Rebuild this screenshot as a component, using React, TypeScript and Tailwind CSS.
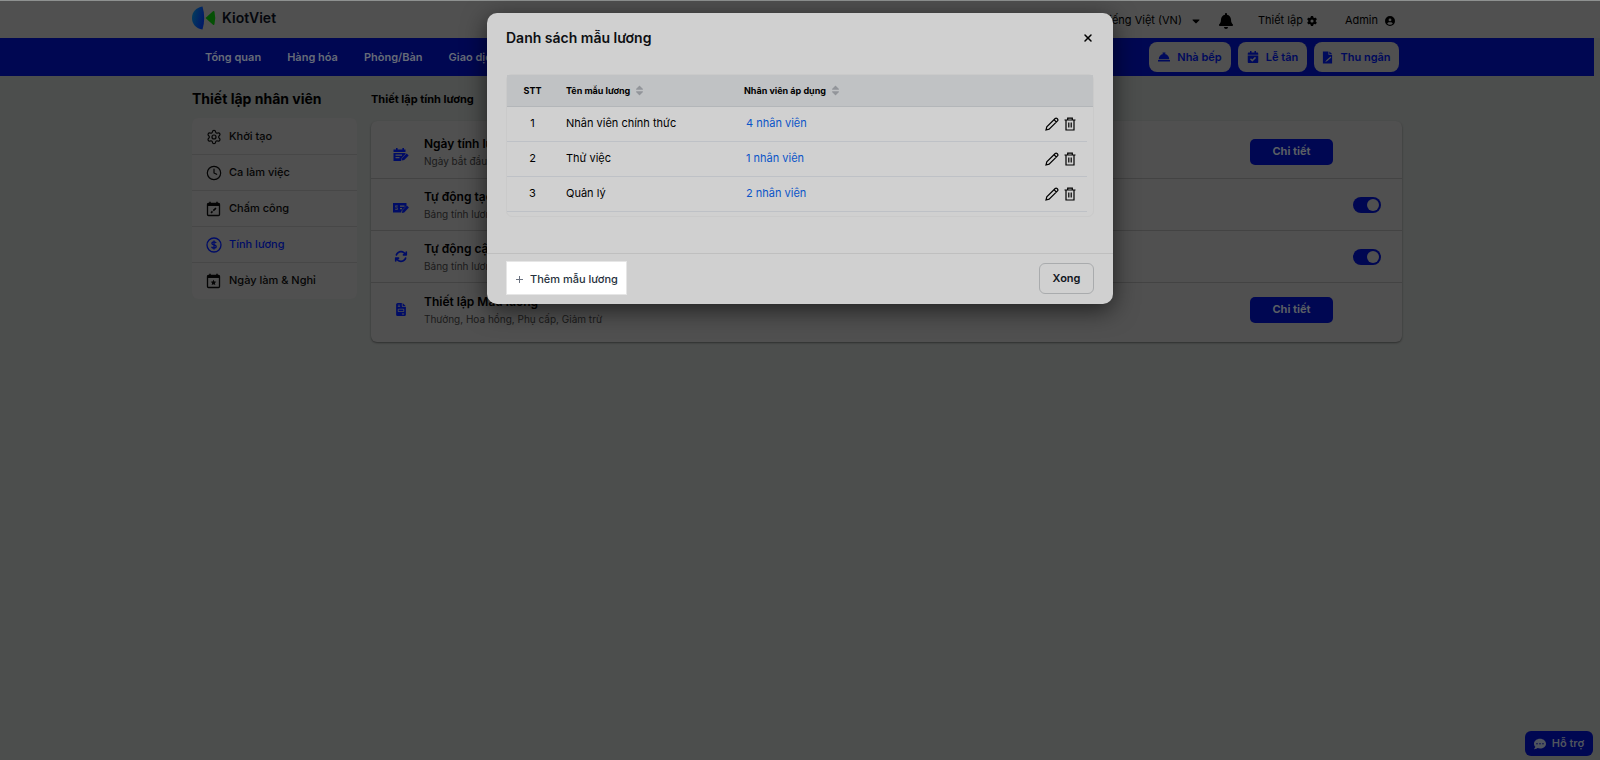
import React from "react";
import { Settings, Clock, X } from "lucide-react";
import {
  FaBell,
  FaCalendarCheck,
  FaCaretDown,
  FaCommentDots,
  FaConciergeBell,
} from "react-icons/fa";
import { FaArrowsRotate, FaCircleUser, FaFileInvoice, FaGear, FaSort } from "react-icons/fa6";

const navItems = ["Tổng quan", "Hàng hóa", "Phòng/Bàn", "Giao dịch"];

const templates = [
  { id: 1, name: "Nhân viên chính thức", staff: "4 nhân viên" },
  { id: 2, name: "Thử việc", staff: "1 nhân viên" },
  { id: 3, name: "Quản lý", staff: "2 nhân viên" },
];

const CalendarBox: React.FC<{ children: React.ReactNode }> = ({ children }) => (
  <svg viewBox="0 0 16 16" className="h-4 w-4 shrink-0" fill="none" stroke="currentColor" strokeWidth="1.3">
    <rect x="1.5" y="2.5" width="12" height="12" rx="1" />
    <path d="M1.500 3h12v1.500h-12z" fill="currentColor" strokeWidth="1" />
    <path d="M4 0.8v3M11 0.8v3" strokeWidth="1.5" />
    {children}
  </svg>
);

const DollarCircle = () => (
  <svg viewBox="0 0 16 16" className="h-4 w-4 shrink-0" fill="none" stroke="currentColor" strokeWidth="1.3">
    <circle cx="8" cy="8" r="7" />
    <path d="M10.2 6.1C9.8 5.2 9 4.9 8 4.9c-1.200 0-2.100.5-2.100 1.500 0 2.200 4.300.9 4.300 3.200 0 1-.9 1.600-2.200 1.600-1.200 0-2.100-.5-2.400-1.500M8 3.600v9" />
  </svg>
);

const menu = [
  { label: "Khởi tạo", icon: <Settings className="h-4 w-4" strokeWidth={1.8} /> },
  { label: "Ca làm việc", icon: <Clock className="h-4 w-4" strokeWidth={1.8} /> },
  {
    label: "Chấm công",
    icon: (
      <CalendarBox>
        <path d="M5 11.800 6.500 10.400M7.300 9.600 10 7.200" strokeWidth="1.600" />
      </CalendarBox>
    ),
  },
  { label: "Tính lương", icon: <DollarCircle />, active: true },
  {
    label: "Ngày làm & Nghỉ",
    icon: (
      <CalendarBox>
        <path
          d="m7.500 6.700 .9 1.800 1.900.3-1.400 1.300.4 2-1.800-.9-1.800.9.4-2-1.400-1.300 1.900-.3z"
          fill="currentColor"
          stroke="none"
        />
      </CalendarBox>
    ),
  },
];

// small blue glyphs with a pen laid over the lower right corner
const CalendarPen = () => (
  <svg viewBox="0 -6 16 20" className="h-5 w-4" fill="currentColor">
    <path
      d="M3 0h1.600v1.500h4.800V0H11v1.500h1.500V4H.5V1.500H3zM.5 5h12v1L8.800 9.700 8 13H.5zM2.500 6.600v1.200H9V6.600zm0 2.500v1.200h4V9.100z"
      fillRule="evenodd"
    />
    <path d="m13.700 5.500 2 2-4.500 4.500-2.500.6.500-2.600z" />
  </svg>
);

const MoneyPen = () => (
  <svg viewBox="0 -6 16 20" className="h-5 w-4" fill="currentColor">
    <path
      d="M0 2h13.500v2.800L8.500 9.700l-.3 1.800H0zM7 4.500v1.200h4.500V4.500zm0 2.500v1.200h2V7zM2.200 4.500v1.700l2 .9v.6h-2v1h2.600V6.800l-2-.9v-.5h2v-.9z"
      fillRule="evenodd"
    />
    <path d="m13.900 4.500 2 2-4.700 4.900-2.300.5.500-2.500z" />
  </svg>
);

const FilePen = () => (
  <svg viewBox="0 0 12 14" className="h-[13px] w-[11px]" fill="currentColor">
    <path
      d="M1 .5h6V4h4v9.500H1zM8 .5 11 3.200H8zM9.300 6 5 9.600l-1.500 2.200 2.400-1 4.300-3.700z"
      fillRule="evenodd"
    />
  </svg>
);

const Toggle: React.FC<{ label: string }> = ({ label }) => (
  <label className="relative mr-[21px] block h-4 w-7">
    <input
      type="checkbox"
      defaultChecked
      aria-label={label}
      className="peer block h-4 w-7 appearance-none rounded-full bg-[#444444] checked:bg-[#000752]"
    />
    <span className="pointer-events-none absolute top-[2px] left-[2px] h-3 w-3 rounded-full bg-[#505050] peer-checked:left-[14px]" />
  </label>
);

const DetailButton = () => (
  <button className="mr-[69px] h-[26px] w-[83px] rounded-[5px] bg-[#000752] text-[11px] font-bold text-[#5a5e64]">
    Chi tiết
  </button>
);

const settings = [
  { title: "Ngày tính lương", note: "Ngày bắt đầu kỳ", icon: <CalendarPen />, toggle: false },
  { title: "Tự động tạo", note: "Bảng tính lương", icon: <MoneyPen />, toggle: true },
  {
    title: "Tự động cập nhật",
    note: "Bảng tính lương",
    icon: <FaArrowsRotate className="h-[13px] w-4" />,
    toggle: true,
  },
  {
    title: "Thiết lập Mẫu lương",
    note: "Thưởng, Hoa hồng, Phụ cấp, Giảm trừ",
    icon: <FaFileInvoice className="h-[13px] w-4" />,
    toggle: false,
  },
];

const Logo = () => (
  <svg viewBox="0 0 24 24" className="h-6 w-6">
    <defs>
      <linearGradient id="wing" x1="0" x2="1" y1="0" y2="0.4">
        <stop offset="0" stopColor="#04405c" />
        <stop offset="1" stopColor="#001a66" />
      </linearGradient>
    </defs>
    <path d="M10.500.5C4 1.500 0 6 0 12s4 10.700 10.500 11.500C12.800 16 12.800 8 10.500.5z" fill="url(#wing)" />
    <path d="M13.500 12 21 5.200q1-.6 1.500.6 1.500 6.200 0 12.400-.5 1.200-1.500.6z" fill="#045004" />
  </svg>
);

const PencilIcon = () => (
  <svg viewBox="0 0 14 14" className="h-[14px] w-[14px]" fill="none" stroke="currentColor" strokeWidth="1.2">
    <path d="M1 13l.8-3.200 8.400-8.300a1.300 1.300 0 0 1 1.800 0l.5.5a1.300 1.300 0 0 1 0 1.800l-8.400 8.400zM9 2.700l2.300 2.300" />
  </svg>
);

const TrashIcon = () => (
  <svg viewBox="0 0 12 14" className="h-[14px] w-3" fill="none" stroke="currentColor" strokeWidth="1.200">
    <path d="M.5 3h11M2 3v10h8V3M3.700 3V1.200h4.600V3M4.800 5.500v5M7.200 5.500v5" />
  </svg>
);

const Modal = () => (
  <div
    role="dialog"
    aria-labelledby="modal-title"
    className="absolute top-[13px] left-1/2 w-[626px] -translate-x-1/2 rounded-[10px] bg-[#d0d0d0] text-black shadow-[0_6px_24px_rgba(0,0,0,0.6)]"
  >
    <div className="flex h-[61px] justify-between px-[19px] pt-[15px]">
      <h2 id="modal-title" className="text-sm leading-5 font-semibold text-[#0d0f12]">
        Danh sách mẫu lương
      </h2>
      <button aria-label="Đóng" className="h-5">
        <X className="h-3 w-3" strokeWidth={3} />
      </button>
    </div>

    <div className="mx-[19px] rounded-md border border-[#cacaca] pb-1">
      <table className="w-full table-fixed border-collapse text-[11px]">
        <thead className="bg-[#c0c2c4] text-[9px]">
          <tr className="h-[31px] border-b border-[#b3b6b9] text-left">
            <th className="w-[51px] text-center font-bold">STT</th>
            <th className="w-[178px] pl-2 font-bold">
              <span className="flex items-center gap-[5px]">
                Tên mẫu lương <FaSort className="h-[11px] w-[9px] text-[#92959a]" />
              </span>
            </th>
            <th className="pl-2 font-bold">
              <span className="flex items-center gap-[5px]">
                Nhân viên áp dụng <FaSort className="h-[11px] w-[9px] text-[#92959a]" />
              </span>
            </th>
            <th className="w-[54px]" aria-label="Thao tác" />
            <th className="w-[6px]" aria-hidden="true" />
          </tr>
        </thead>
        <tbody>
          {templates.map((t) => (
            <tr key={t.id} className="h-[35px]">
              <td className="border-b border-[#bec1c6] text-center">{t.id}</td>
              <td className="border-b border-[#bec1c6] pl-2">{t.name}</td>
              <td className="border-b border-[#bec1c6] pl-[10px]">
                <a href="#" className="text-[#0b55c8]">
                  {t.staff}
                </a>
              </td>
              <td className="border-b border-[#bec1c6]">
                <div className="flex items-center gap-[5px] pl-3">
                  <button aria-label="Sửa">
                    <PencilIcon />
                  </button>
                  <button aria-label="Xóa">
                    <TrashIcon />
                  </button>
                </div>
              </td>
              <td />
            </tr>
          ))}
        </tbody>
      </table>
    </div>

    <div className="mt-9 flex h-[51px] items-center justify-between border-t border-[#bfbfbf] px-[19px]">
      <button className="mb-[2px] flex h-[34px] w-[121px] items-center gap-[7px] border border-[#e6e6e6] bg-white pt-1 pl-[9px] text-[11px] font-medium text-[#26313c]">
        <svg viewBox="0 0 7 7" className="h-[7px] w-[7px]" stroke="#6b7280" strokeWidth="1">
          <path d="M3.500 0v7M0 3.500h7" />
        </svg>
        Thêm mẫu lương
      </button>
      <button className="h-[31px] w-[55px] rounded-md border border-[#a9abad] text-[11px] font-semibold text-[#10151c]">
        Xong
      </button>
    </div>
  </div>
);

const App: React.FC = () => {
  return (
    <div className="relative min-h-screen overflow-hidden bg-[#4c4e4d] font-['Inter',sans-serif] text-black">
      <header className="border-t border-[#8e9190] bg-[#505050]">
        <div className="mx-auto flex h-[37px] max-w-[1216px] items-center justify-between pr-[13px]">
          <div className="flex items-center gap-[6px] pb-[3px] text-sm font-semibold">
            <Logo />
            <span className="text-[#05070d]">KiotViet</span>
          </div>
          <div className="flex items-center pt-[2px] text-[11px]">
            <span className="mr-2">Tiếng Việt (VN)</span>
            <FaCaretDown className="mr-4 h-3 w-3" />
            <FaBell className="mr-6 h-4 w-4" />
            <a href="#" className="mr-7 flex items-center gap-1">
              Thiết lập <FaGear className="h-[10px] w-[10px]" />
            </a>
            <a href="#" className="flex items-center gap-[7px]">
              Admin <FaCircleUser className="h-[10px] w-[10px]" />
            </a>
          </div>
        </div>
      </header>

      <nav className="mr-[6px] bg-[#000752]">
        <div className="mx-auto flex h-[38px] max-w-[1216px] items-center justify-between pr-[6px] pl-4 text-[11px] font-semibold">
          <div className="flex gap-[26px] text-[#666b78]">
            {navItems.map((item) => (
              <a key={item} href="#">
                {item}
              </a>
            ))}
          </div>
          <div className="flex gap-[7px] text-[#000a5c]">
            <a href="#" className="flex h-[30px] w-[82px] items-center justify-center gap-[7px] rounded-lg bg-[#505050]">
              <FaConciergeBell className="h-3 w-3" /> Nhà bếp
            </a>
            <a href="#" className="flex h-[30px] w-[69px] items-center justify-center gap-[7px] rounded-lg bg-[#505050]">
              <FaCalendarCheck className="h-3 w-3" /> Lễ tân
            </a>
            <a href="#" className="flex h-[30px] w-[85px] items-center justify-center gap-[7px] rounded-lg bg-[#505050]">
              <FilePen /> Thu ngân
            </a>
          </div>
        </div>
      </nav>

      <main className="mx-auto flex max-w-[1216px] gap-[14px] pt-[13px]">
        <aside className="w-[165px] shrink-0">
          <h1 className="mb-[9px] text-sm leading-5 font-bold">Thiết lập nhân viên</h1>
          <ul className="divide-y divide-[#474747] overflow-hidden rounded-md bg-[#505050] pt-px pb-px text-[11px] font-medium">
            {menu.map((m) => (
              <li key={m.label}>
                <a
                  href="#"
                  className={`flex h-[35px] items-center gap-[7px] pl-[14px] ${m.active ? "text-[#000c66]" : "text-[#050505]"}`}
                >
                  {m.icon}
                  {m.label}
                </a>
              </li>
            ))}
          </ul>
        </aside>

        <section className="flex-1 pr-[6px]">
          <h2 className="mb-3 text-[11px] leading-5 font-bold">Thiết lập tính lương</h2>
          <div className="divide-y divide-[#434343] rounded-md bg-[#505050] shadow-[0_1px_2px_rgba(0,0,0,0.4)]">
            {settings.map((s) => (
              <div
                key={s.title}
                className="flex h-[52px] items-center first:h-[58px] first:pt-1 last:h-[59px] last:pb-[6px]"
              >
                <span className="flex w-[53px] items-center pl-[22px] text-[#000c66]">{s.icon}</span>
                <div className="flex-1">
                  <h3 className="text-xs leading-[18px] font-semibold">{s.title}</h3>
                  <p className="text-[10px] leading-4 text-[#1a1a1a]">{s.note}</p>
                </div>
                {s.toggle ? <Toggle label={s.title} /> : <DetailButton />}
              </div>
            ))}
          </div>
        </section>
      </main>

      <button className="fixed right-[7px] bottom-1 flex h-[25px] w-[68px] items-center justify-center gap-[6px] rounded-md bg-[#000752] text-[11px] font-semibold text-[#50555e]">
        <FaCommentDots className="h-3 w-3" /> Hỗ trợ
      </button>

      <Modal />
    </div>
  );
};

export default App;
